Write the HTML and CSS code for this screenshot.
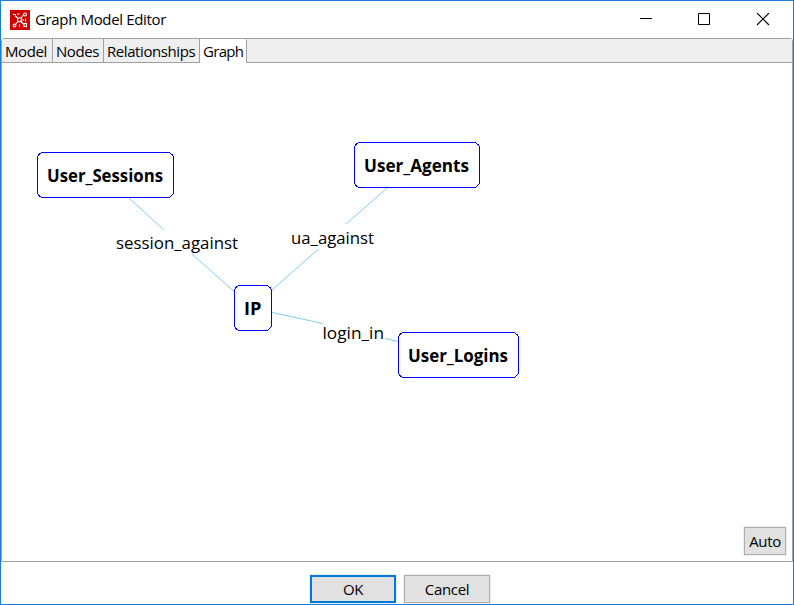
FILE: index.html
```html
<!DOCTYPE html>
<html lang="en">
<head>
<meta charset="utf-8">
<title>Graph Model Editor</title>
<link rel="stylesheet" href="styles.css">
</head>
<body>
<div class="window">
  <header class="titlebar">
    <svg class="logo" width="20" height="20" viewBox="0 0 20 20">
      <path fill="#d00000" d="M0 0h20v20H0z"/>
      <g fill="none" stroke="#fff" stroke-width="1.1">
        <circle cx="9.500" cy="9.800" r="2"/>
        <path d="M5 5.500l3 3M11 8l3-3.500M8 11.500l-2.500 3M11 11.500l3 3M12 10h2M3 4.500h3M7 4h2.500"/>
        <circle cx="15" cy="4.500" r="1.500"/>
        <circle cx="4.500" cy="15.500" r="1.400"/>
        <rect x="14" y="13.500" width="2.500" height="3"/>
        <path d="M15.500 8.500v3M9.500 14.500v2"/>
      </g>
    </svg>
    <h1 class="title">Graph Model Editor</h1>
    <svg class="controls" width="130" height="14" viewBox="0 0 130 14">
      <path d="M0 5.500h12" stroke="#000"/>
      <path d="M58.500.500h11v11h-11z" fill="none" stroke="#000"/>
      <path d="M117 0l12 12M129 0l-12 12" stroke="#000" stroke-width="1.100"/>
    </svg>
  </header>
  <main class="tabs">
    <nav class="tabbar">
      <span class="tab tab-model">Model</span>
      <span class="tab tab-nodes">Nodes</span>
      <span class="tab tab-relationships">Relationships</span>
      <span class="tab tab-graph">Graph</span>
    </nav>
    <section class="panel">
      <svg class="graph" width="790" height="498" viewBox="2 63 790 498">
        <g class="edges">
          <path d="M129 198l34.500 31.500M192 254l42 37.500"/>
          <path d="M387 188l-41 36M318.500 249l-47 41.500"/>
          <path d="M272 312.500l51 11M385 338.500l13 3"/>
        </g>
        <g class="nodes">
          <rect x="37.500" y="152.500" width="136" height="45" rx="6"/>
          <rect x="354.500" y="142.500" width="125" height="45" rx="6"/>
          <rect x="234.500" y="285.500" width="37" height="45" rx="6"/>
          <rect x="398.500" y="332.500" width="120" height="45" rx="6"/>
        </g>
        <g class="node-names">
          <text x="47" y="182" textLength="116" lengthAdjust="spacingAndGlyphs">User_Sessions</text>
          <text x="364" y="172" textLength="105" lengthAdjust="spacingAndGlyphs">User_Agents</text>
          <text x="244" y="315" textLength="17.500" lengthAdjust="spacingAndGlyphs">IP</text>
          <text x="408" y="362" textLength="100" lengthAdjust="spacingAndGlyphs">User_Logins</text>
        </g>
        <g class="edge-names">
          <text x="116" y="249" textLength="122" lengthAdjust="spacingAndGlyphs">session_against</text>
          <text x="291" y="244" textLength="83" lengthAdjust="spacingAndGlyphs">ua_against</text>
          <text x="322.500" y="339" textLength="61.500" lengthAdjust="spacingAndGlyphs">login_in</text>
        </g>
      </svg>
      <button class="button auto">Auto</button>
    </section>
  </main>
  <footer class="actions">
    <button class="button primary">OK</button>
    <button class="button">Cancel</button>
  </footer>
</div>
</body>
</html>
```
FILE: styles.css
```css
* { box-sizing: border-box; }

body {
  margin: 0;
  overflow: hidden;
  background: #fff;
  color: #000;
  font: 15px/20px "Segoe UI", "Open Sans", "Noto Sans", sans-serif;
}

.window {
  width: 794px;
  height: 605px;
  border: 1px solid #1a7fd4;
  display: flex;
  flex-direction: column;
}

.titlebar {
  height: 37px;
  display: flex;
  align-items: center;
  padding: 0 23px 0 9px;
}

.logo { flex: none; }

.title {
  margin: 0 auto 0 5px;
  padding-bottom: 2px;
  font-size: 15px;
  font-weight: 400;
  letter-spacing: -0.35px;
}

.controls { flex: none; }

.tabs {
  height: 524px;
  border: 1px solid #a0a0a0;
  border-radius: 3px 3px 0 0;
  display: flex;
  flex-direction: column;
}

.tabbar {
  height: 24px;
  display: flex;
  background: #efefef;
  border-bottom: 1px solid #a0a0a0;
}

.tab {
  height: 23px;
  padding: 2px 0 0 3px;
  border-right: 1px solid #a0a0a0;
  letter-spacing: -0.42px;
  white-space: nowrap;
}

.tab-model { width: 51px; }
.tab-nodes { width: 51px; }
.tab-relationships { width: 96px; }
.tab-graph {
  width: 47px;
  height: 24px;
  background: #fff;
  border-radius: 0 2px 0 0;
  letter-spacing: -0.7px;
}

.panel { position: relative; flex: 1; }
.graph { display: block; }
.edges { stroke: #7ecbf7; fill: none; }
.nodes { fill: #fff; stroke: #00f; shape-rendering: crispEdges; }
.graph text { font-size: 17px; }
.node-names { font-weight: 700; }

.button {
  width: 86px;
  height: 28px;
  padding: 0;
  border: 1px solid #adadad;
  outline: 1px solid #f0f0f0;
  background: #e1e1e1;
  color: #000;
  font: inherit;
  letter-spacing: -0.35px;
}

.primary { border: 2px solid #0078d7; }

.auto {
  position: absolute;
  right: 6px;
  bottom: 6px;
  width: 42px;
}

.actions {
  display: flex;
  justify-content: center;
  gap: 8px;
  padding: 13px 0 0 6px;
}
```
